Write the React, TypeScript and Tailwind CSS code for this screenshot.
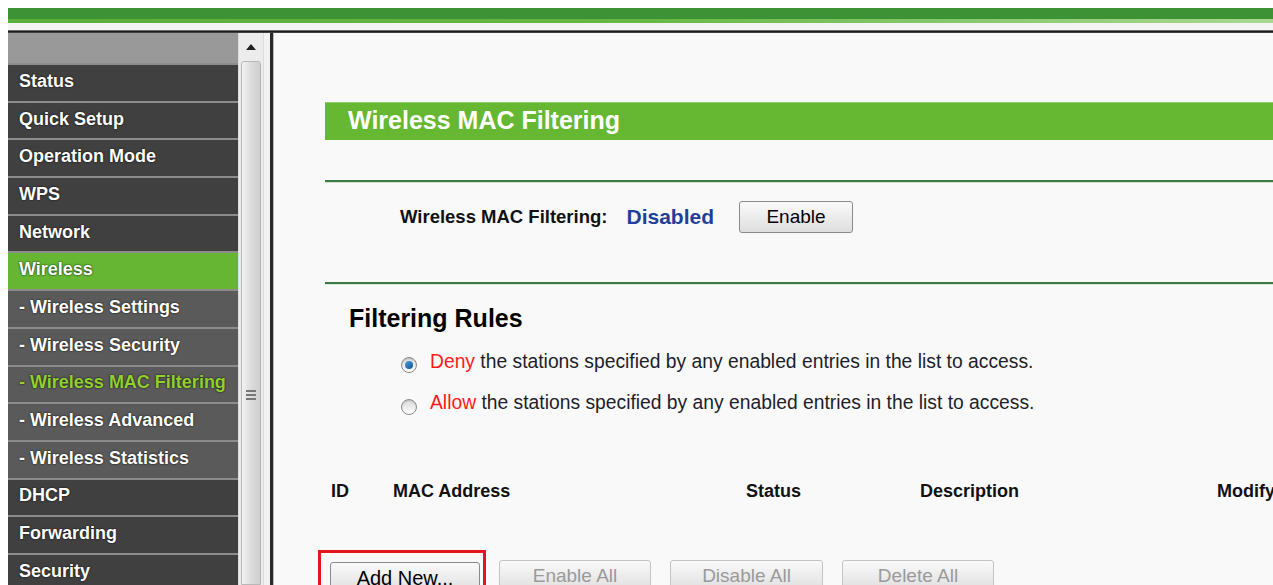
import React from 'react'

type NavItem = { label: string; sub?: boolean; active?: boolean; current?: boolean }

const NAV: NavItem[] = [
  { label: 'Status' },
  { label: 'Quick Setup' },
  { label: 'Operation Mode' },
  { label: 'WPS' },
  { label: 'Network' },
  { label: 'Wireless', active: true },
  { label: '- Wireless Settings', sub: true },
  { label: '- Wireless Security', sub: true },
  { label: '- Wireless MAC Filtering', sub: true, current: true },
  { label: '- Wireless Advanced', sub: true },
  { label: '- Wireless Statistics', sub: true },
  { label: 'DHCP' },
  { label: 'Forwarding' },
  { label: 'Security' },
]

function navRowClass(item: NavItem) {
  if (item.active) return 'bg-[#66b633] text-white'
  if (item.current) return 'bg-[#5a5a5a] text-[#93cf2e]'
  if (item.sub) return 'bg-[#5a5a5a] text-white'
  return 'bg-[#404040] text-white'
}

function Sidebar() {
  return (
    <div className="flex w-[230px] shrink-0 flex-col overflow-hidden">
      <div className="h-[30px] shrink-0 bg-[#999999]" />
      {NAV.map((item) => (
        <div
          key={item.label}
          className={`flex h-[37.7px] shrink-0 items-center border-t-2 border-[#8c8c8c] pb-[3px] pl-[11px] text-[18px] font-bold whitespace-nowrap [text-shadow:0_0_2px_#000] ${navRowClass(item)}`}
        >
          {item.label}
        </div>
      ))}
    </div>
  )
}

function Scrollbar() {
  return (
    <div className="flex w-[26px] shrink-0 flex-col border-x border-[#dcdcdc] bg-[#ececec]">
      <div className="flex h-[28px] shrink-0 items-center justify-center">
        <svg width="10" height="6" viewBox="0 0 10 6">
          <path d="M0 6 L5 0 L10 6 Z" fill="#222" />
        </svg>
      </div>
      <div className="mx-[2px] flex flex-1 flex-col items-center rounded-t-[3px] border border-[#b8b8b8] bg-gradient-to-r from-[#f4f4f4] via-[#dcdcdc] to-[#cfcfcf] pt-[328px]">
        <div className="flex flex-col gap-[2px]">
          <div className="h-[2px] w-[10px] bg-[#777]" />
          <div className="h-[2px] w-[10px] bg-[#777]" />
          <div className="h-[2px] w-[10px] bg-[#777]" />
        </div>
      </div>
    </div>
  )
}

function Radio({ checked }: { checked?: boolean }) {
  return (
    <div className="flex h-[16px] w-[16px] items-center justify-center rounded-full border border-[#8a8a8a] bg-gradient-to-b from-[#d9d9d9] to-[#ffffff] shadow-[inset_0_1px_1px_rgba(0,0,0,0.15)]">
      {checked && <div className="h-[8px] w-[8px] rounded-full bg-gradient-to-br from-[#4aa3e0] to-[#0b4f8f]" />}
    </div>
  )
}

function Button({ children, disabled, className = '' }: { children: React.ReactNode; disabled?: boolean; className?: string }) {
  return (
    <div
      className={`flex h-[32px] items-center justify-center rounded-[3px] border bg-gradient-to-b from-[#fafafa] to-[#dedede] ${
        disabled ? 'border-[#c4c4c4] text-[#9a9a9a]' : 'border-[#8a8a8a] text-black'
      } ${className}`}
    >
      {children}
    </div>
  )
}

function Content() {
  return (
    <div className="flex-1 overflow-hidden bg-[#f9f9f9] pl-[51px] pt-[69px]">
      <div className="flex h-[38px] items-center border-t border-[#8fd06a] bg-[#66b833] pb-[2px] pl-[23px] text-[25px] font-bold text-white whitespace-nowrap">
        Wireless MAC Filtering
      </div>

      <div className="mt-[40px] h-[2px] bg-[#3b7a47] shadow-[0_1px_0_#d0e6d0]" />

      <div className="mt-[19px] flex h-[32px] items-center pl-[75px]">
        <span className="text-[18.5px] font-bold text-[#111]">Wireless MAC Filtering:</span>
        <span className="ml-[19px] text-[21px] font-bold text-[#1f3f9a]">Disabled</span>
        <Button className="ml-[25px] w-[114px] text-[19px]">Enable</Button>
      </div>

      <div className="mt-[49px] h-[2px] bg-[#3b7a47] shadow-[0_1px_0_#d0e6d0]" />

      <div className="mt-[16px] pl-[24px] text-[25px] font-bold text-black">Filtering Rules</div>

      <div className="mt-[10px] flex flex-col gap-[13px] pl-[76px] text-[19.3px] text-[#1e1e2a]">
        <div className="flex items-center gap-[13px] whitespace-nowrap">
          <div className="mt-[6px]">
            <Radio checked />
          </div>
          <span>
            <span className="text-[#ff1a1a]">Deny</span> the stations specified by any enabled entries in the list to access.
          </span>
        </div>
        <div className="flex items-center gap-[13px] whitespace-nowrap">
          <div className="mt-[6px]">
            <Radio />
          </div>
          <span>
            <span className="text-[#ff1a1a]">Allow</span> the stations specified by any enabled entries in the list to access.
          </span>
        </div>
      </div>

      <div className="mt-[60px] grid grid-cols-[62px_353px_174px_297px_1fr] pl-[6px] text-[18px] font-bold text-[#111] whitespace-nowrap">
        <span>ID</span>
        <span>MAC Address</span>
        <span>Status</span>
        <span>Description</span>
        <span>Modify</span>
      </div>

      <div className="-ml-[7px] mt-[45px] flex items-start gap-[19px] text-[19px]">
        <div className="mr-[-6px] border-[3px] border-[#e3141e] pl-[9px] pr-[3px] pt-[9px]">
          <Button className="w-[150px] text-[20px]">Add New...</Button>
        </div>
        <Button disabled className="mt-[10px] w-[152px]">Enable All</Button>
        <Button disabled className="mt-[10px] w-[153px]">Disable All</Button>
        <Button disabled className="mt-[10px] w-[152px]">Delete All</Button>
      </div>
    </div>
  )
}

export default function App() {
  return (
    <div className="h-[585px] w-[1273px] overflow-hidden bg-white pl-2 font-['Liberation_Sans',Arial,sans-serif]">
      {/* banner strip */}
      <div className="h-2" />
      <div className="h-[11px] bg-[#3d9236]" />
      <div className="h-[4px] bg-gradient-to-r from-[#5aae3c] via-[#66b844] to-[#a8d890]" />
      <div className="h-[7px] bg-[#f4f4f4]" />
      <div className="h-[3px] bg-gradient-to-b from-[#9a9a9a] via-[#1a1a1a] to-[#555]" />

      <div className="flex h-[552px]">
        <Sidebar />
        <Scrollbar />
        <div className="w-[6px] shrink-0 bg-[#f2f2f2]" />
        <div className="w-[3px] shrink-0 bg-[#2a2a2a]" />
        <div className="w-[1px] shrink-0 bg-[#bdbdbd]" />
        <Content />
      </div>
    </div>
  )
}
